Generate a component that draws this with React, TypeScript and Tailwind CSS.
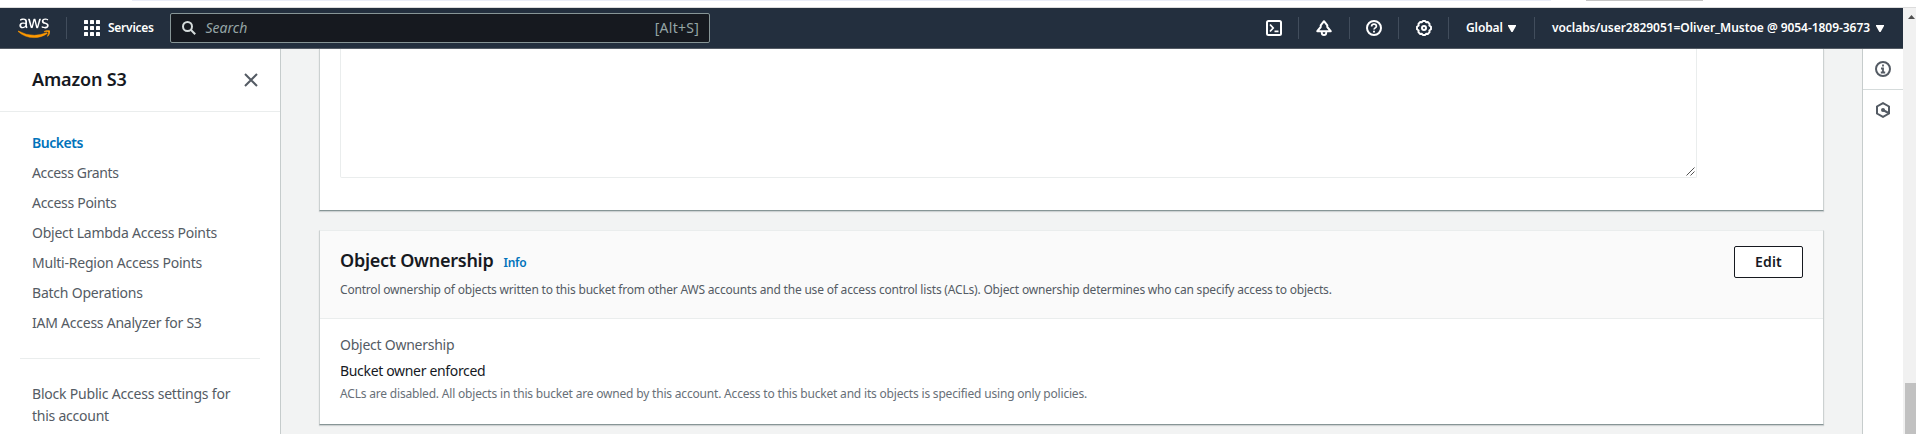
import type { ReactNode } from "react";
import { FaAws } from "react-icons/fa";

const links = [
  { label: "Access Grants", spacing: "tracking-[-0.36px]" },
  { label: "Access Points", spacing: "tracking-[-0.3px]" },
  { label: "Object Lambda Access Points", spacing: "tracking-[-0.25px]" },
  { label: "Multi-Region Access Points", spacing: "tracking-[-0.23px]" },
  { label: "Batch Operations", spacing: "tracking-[-0.22px]" },
  { label: "IAM Access Analyzer for S3", spacing: "tracking-[-0.24px]" },
];

function AwsLogo() {
  return (
    <div className="grid h-[26px] w-[32px] shrink-0 grid-cols-1 grid-rows-1">
      <FaAws className="col-start-1 row-start-1 h-[26px] w-[32px] text-white [clip-path:inset(0_0_42%_0)]" />
      <FaAws className="col-start-1 row-start-1 h-[26px] w-[32px] stroke-[#ff9900] stroke-[10] text-[#ff9900] [clip-path:inset(58%_0_0_0)]" />
    </div>
  );
}

function GridIcon() {
  return (
    <svg className="size-4 shrink-0" viewBox="0 0 16 16" fill="#fff">
      {[0, 6, 12].map((y) =>
        [0, 6, 12].map((x) => <rect key={`${x}-${y}`} x={x} y={y} width="4" height="4" rx="0.6" />),
      )}
    </svg>
  );
}

function Icon({ children, className = "" }: { children: ReactNode; className?: string }) {
  return (
    <svg
      className={`size-4 shrink-0 ${className}`}
      viewBox="0 0 16 16"
      fill="none"
      stroke="currentColor"
      strokeWidth="2"
      strokeLinejoin="round"
    >
      {children}
    </svg>
  );
}

function Separator() {
  return <div className="h-[22px] w-px shrink-0 bg-[#414d5c]" />;
}

function Caret() {
  return (
    <svg className="h-[7px] w-2 shrink-0" viewBox="0 0 8 7" fill="#fff">
      <path d="M0 0h8v1L4.600 7H3.400L0 1z" />
    </svg>
  );
}

function TopBar() {
  return (
    <header className="flex h-[41px] items-center border-b border-[#545b64] bg-[#232f3e] pl-[18px] text-white">
      <AwsLogo />
      <div className="ml-4">
        <Separator />
      </div>
      <div className="ml-[17px] flex items-center">
        <GridIcon />
        <span className="ml-2 w-[62px] text-xs font-semibold tracking-[-0.25px]">Services</span>
      </div>
      <div className="flex h-[30px] w-[540px] items-center rounded-xs border border-[#879596] bg-[#16191f] pr-[10px] pl-[11px] text-sm text-[#95a5a6]">
        <svg className="size-[14px] shrink-0" viewBox="0 0 14 14" fill="none" stroke="#d5dbdb" strokeWidth="2">
          <circle cx="5.5" cy="5.5" r="4.5" />
          <path d="M8.8 8.8l4.4 4.4" />
        </svg>
        <span className="ml-[9.5px] grow italic">Search</span>
        <span className="tracking-[0.25px]">[Alt+S]</span>
      </div>
      <div className="ml-[556px] flex items-center">
        <Icon>
          <rect x="1" y="1" width="14" height="14" rx="1.5" />
          <path d="M4 4.5L7.2 8 4 11.5M8.5 11.3h4" strokeWidth="1.7" strokeLinejoin="miter" />
        </Icon>
        <div className="mx-4">
          <Separator />
        </div>
        <Icon className="ml-px">
          <path d="M1.300 11.200L4.700 7V5.400L8 1.200l3.300 4.200V7l3.400 4.200z" />
          <path d="M5.800 11.500v1.400c0 1.200 1 2.100 2.200 2.100s2.200-.9 2.200-2.100v-1.400" strokeWidth="1.9" />
        </Icon>
        <div className="mr-4 ml-[17px]">
          <Separator />
        </div>
        <Icon>
          <circle cx="8" cy="8" r="7" />
          <path d="M5.6 6.4C5.6 5 6.6 4.1 8 4.1s2.4.9 2.4 2.1c0 1.6-2.4 1.7-2.4 3.4" strokeWidth="1.7" />
          <path d="M8 10.7v1.8" strokeWidth="1.9" />
        </Icon>
        <div className="mx-4">
          <Separator />
        </div>
        <Icon className="ml-px">
          <path
            d="M6.8 1h2.4l.9 1.300 1.700-.3 1.800 1.800-.3 1.700L15 6.700v2.600l-1.700 1.200.3 1.700-1.800 1.800-1.700-.3L9.200 15H6.800l-.9-1.300-1.700.3-1.800-1.800.3-1.700L1 9.300V6.700l1.700-1.200-.3-1.700 1.800-1.800 1.700.3z"
            strokeWidth="1.900"
          />
          <circle cx="8" cy="8" r="2" strokeWidth="2" />
        </Icon>
        <div className="mr-[17px] ml-4">
          <Separator />
        </div>
        <span className="w-[42px] text-xs font-semibold tracking-[-0.1px]">Global</span>
        <Caret />
        <div className="mr-[17px] ml-[18px]">
          <Separator />
        </div>
        <span className="w-[323.500px] text-xs font-semibold tracking-[-0.05px] whitespace-nowrap">
          voclabs/user2829051=Oliver_Mustoe @ 9054-1809-3673
        </span>
        <Caret />
      </div>
    </header>
  );
}

function Sidebar() {
  return (
    <nav className="h-full w-[281px] shrink-0 border-r border-[#c6cccc] bg-white text-sm text-[#545b64]">
      <div className="flex h-[63px] items-center justify-between border-b border-[#eaeded] pr-[22px] pl-8">
        <h2 className="pb-[2px] text-lg font-semibold tracking-[-0.15px] text-[#16191f]">Amazon S3</h2>
        <svg className="size-[14px]" viewBox="0 0 14 14" fill="none" stroke="#545b64" strokeWidth="2">
          <path d="M1 1l12 12M13 1L1 13" />
        </svg>
      </div>
      <ul className="pt-4 pl-8 leading-[30px]">
        <li className="font-semibold tracking-[-0.45px] text-[#0073bb]">Buckets</li>
        {links.map((link) => (
          <li key={link.label} className={link.spacing}>
            {link.label}
          </li>
        ))}
      </ul>
      <hr className="mx-5 mt-5 border-[#eaeded]" />
      <p className="mt-6 pl-8 leading-[22px]">
        <span className="block tracking-[-0.2px]">Block Public Access settings for</span>
        <span className="block tracking-[-0.24px]">this account</span>
      </p>
    </nav>
  );
}

function Content() {
  return (
    <main className="flex grow flex-col bg-[#f2f3f3] px-[38px]">
      <section className="flex h-[162px] shrink-0 border-x border-b border-x-[#ccd1d1] border-b-[#879596] bg-white pl-5 shadow-[0_1px_1px_0_rgba(0,28,36,0.15)]">
        <div className="flex h-[129px] w-[1357px] items-end justify-end rounded-b-xs border-x border-b border-[#eaeded]">
          <svg className="mr-px mb-px size-[9px]" viewBox="0 0 9 9" stroke="#545454" strokeWidth="1">
            <path d="M.5 8.500l8-8M4.500 8.500l4-4" />
          </svg>
        </div>
      </section>
      <section className="mt-[19px] h-[195px] shrink-0 border border-x-[#ccd1d1] border-t-[#eaeded] border-b-[#879596] bg-white shadow-[0_1px_1px_0_rgba(0,28,36,0.15)]">
        <div className="flex h-[88px] items-start justify-between border-b border-[#eaeded] bg-[#fafafa] px-5">
          <div className="pt-[18px]">
            <div className="flex items-baseline">
              <h2 className="w-[163.500px] text-lg leading-[22px] font-semibold tracking-[-0.27px] text-[#16191f]">
                Object Ownership
              </h2>
              <span className="text-xs font-semibold tracking-[-0.25px] text-[#0073bb]">Info</span>
            </div>
            <p className="mt-[9px] text-xs leading-5 tracking-[-0.19px] text-[#545b64]">
              Control ownership of objects written to this bucket from other AWS accounts and the use of access control
              lists (ACLs). Object ownership determines who can specify access to objects.
            </p>
          </div>
          <button className="mt-[15px] h-8 w-[69px] rounded-xs border border-[#16191f] bg-white text-sm font-semibold tracking-[0.2px] text-[#16191f]">
            Edit
          </button>
        </div>
        <div className="pt-[15px] pl-5 text-sm leading-[22px]">
          <p className="tracking-[-0.25px] text-[#545b64]">Object Ownership</p>
          <p className="mt-1 tracking-[-0.33px] text-[#16191f]">Bucket owner enforced</p>
          <p className="mt-[2px] text-xs leading-5 tracking-[-0.19px] text-[#687078]">
            ACLs are disabled. All objects in this bucket are owned by this account. Access to this bucket and its
            objects is specified using only policies.
          </p>
        </div>
      </section>
    </main>
  );
}

function ToolRail() {
  return (
    <aside className="w-[41px] shrink-0 border-l border-[#c6cccc] bg-white text-[#545b64]">
      <div className="flex h-[41px] items-center justify-center border-b border-[#d5dbdb]">
        <Icon>
          <circle cx="8" cy="8" r="7" />
          <path d="M8 3.500v2M6 7.500h2v4M5.800 11.500h4.400" strokeWidth="1.8" strokeLinejoin="miter" />
        </Icon>
      </div>
      <div className="flex h-10 items-center justify-center">
        <Icon>
          <path d="M8 1.100l6 3.400v7L8 14.900l-6-3.400v-7z" strokeLinejoin="miter" />
          <circle cx="8" cy="8" r="2" fill="currentColor" stroke="none" />
          <path d="M8 8l5.500 3" />
        </Icon>
      </div>
    </aside>
  );
}

function Scrollbar() {
  return (
    <div className="flex w-[13px] shrink-0 flex-col justify-between bg-[#f1f1f1] pl-[2px]">
      <svg className="mt-[7px] ml-[3px] h-[4px] w-[7px]" viewBox="0 0 7 4" fill="#505050">
        <path d="M3.500 0L7 4H0z" />
      </svg>
      <div className="h-[51px] bg-[#c1c1c1]" />
    </div>
  );
}

export default function App() {
  return (
    <div className="flex h-[434px] w-[1916px] flex-col overflow-hidden bg-white font-['Noto_Sans','Open_Sans',sans-serif]">
      <div className="flex h-2 shrink-0 items-start border-b border-[#dcdcdc]">
        <div className="ml-[132px] h-px w-[1419px] bg-[#e9ecf7]" />
        <div className="ml-[35px] h-px w-[117px] bg-[#c4c4c4]" />
      </div>
      <div className="flex min-h-0 grow">
        <div className="flex w-[1903px] shrink-0 flex-col">
          <TopBar />
          <div className="flex min-h-0 grow">
            <Sidebar />
            <Content />
            <ToolRail />
          </div>
        </div>
        <Scrollbar />
      </div>
    </div>
  );
}
